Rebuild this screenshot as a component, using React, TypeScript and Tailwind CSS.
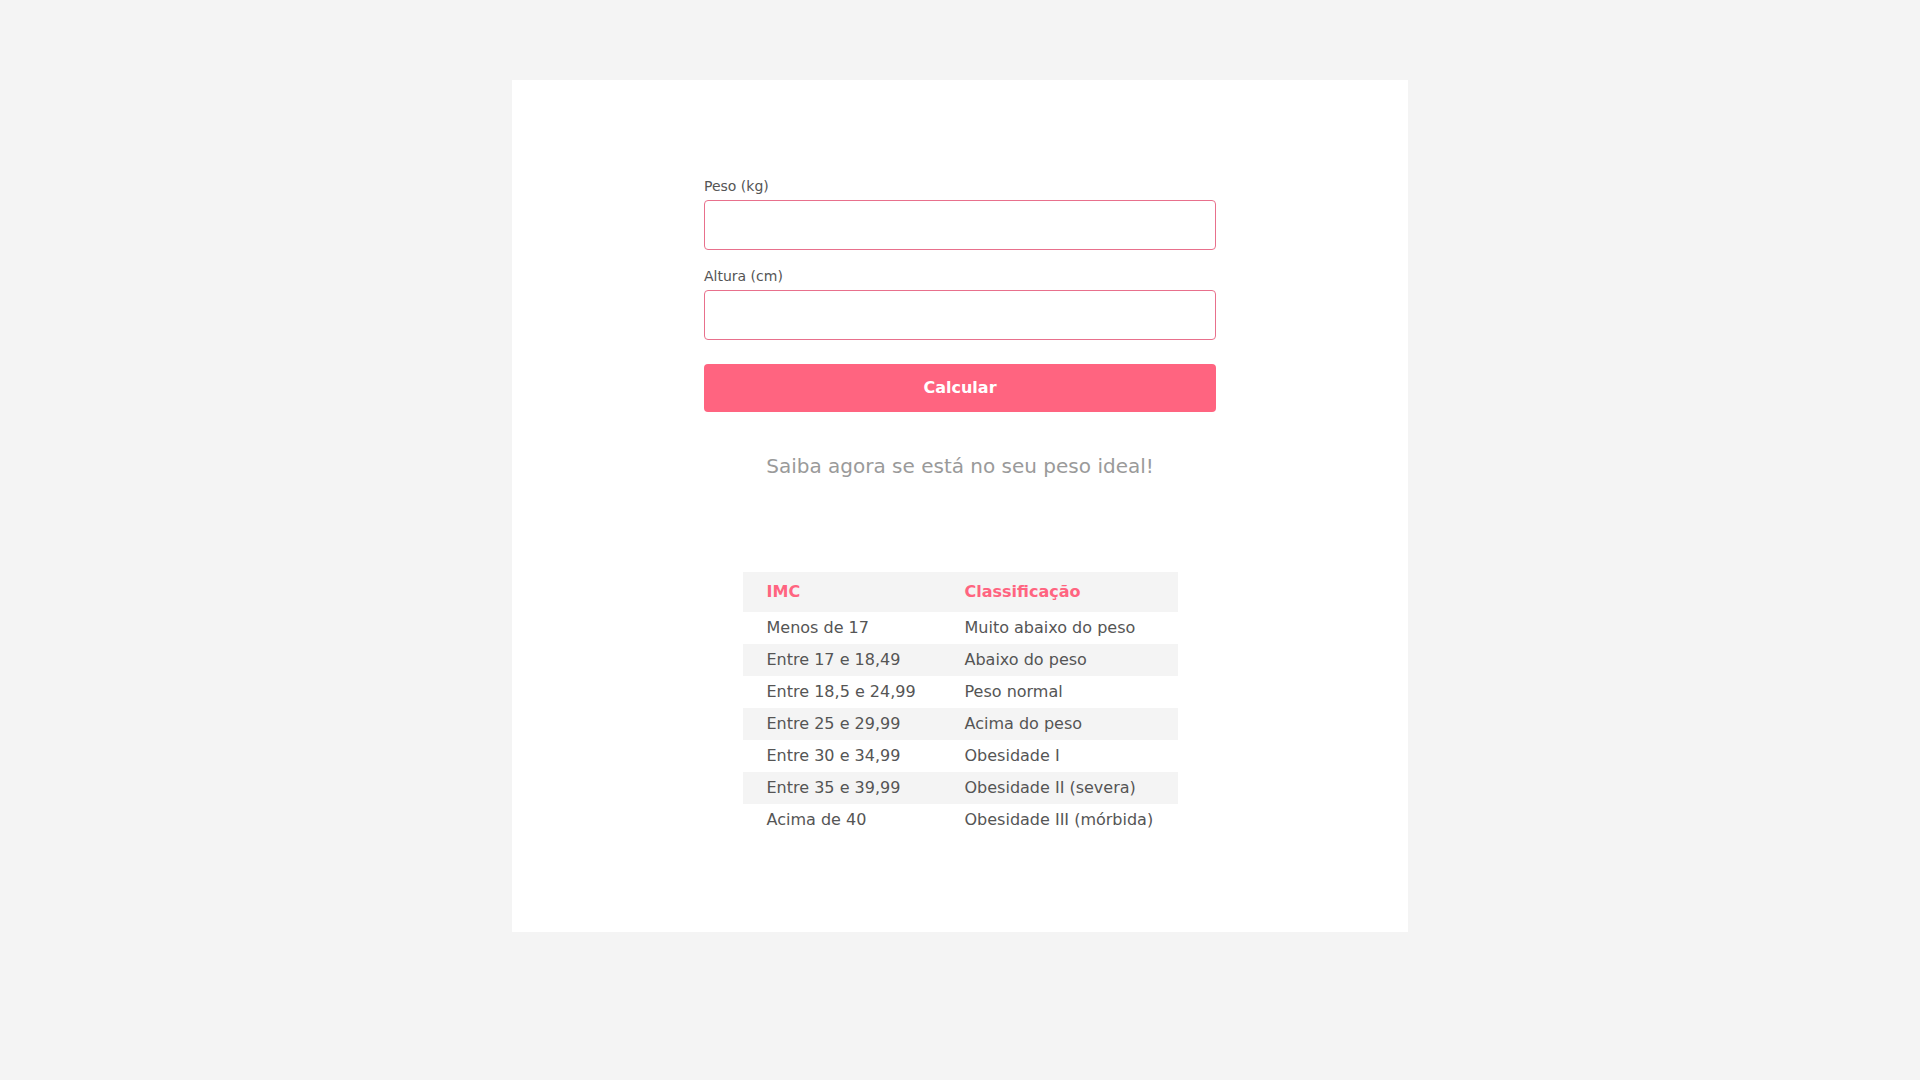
import React, { useState } from "react"

const faixas = [
  { imc: "Menos de 17", classificacao: "Muito abaixo do peso" },
  { imc: "Entre 17 e 18,49", classificacao: "Abaixo do peso" },
  { imc: "Entre 18,5 e 24,99", classificacao: "Peso normal" },
  { imc: "Entre 25 e 29,99", classificacao: "Acima do peso" },
  { imc: "Entre 30 e 34,99", classificacao: "Obesidade I" },
  { imc: "Entre 35 e 39,99", classificacao: "Obesidade II (severa)" },
  { imc: "Acima de 40", classificacao: "Obesidade III (mórbida)" },
]

const App = () => {
  const [peso, setPeso] = useState("")
  const [altura, setAltura] = useState("")
  const [resultado, setResultado] = useState("")

  const calcular = (e: React.FormEvent) => {
    e.preventDefault()
    const p = parseFloat(peso.replace(",", "."))
    const a = parseFloat(altura.replace(",", ".")) / 100
    if (!p || !a) return
    setResultado(`Seu IMC é ${(p / (a * a)).toFixed(2).replace(".", ",")}`)
  }

  return (
    <div
      className="min-h-screen bg-[#f4f4f4] pt-20 pb-[148px]"
      style={{ fontFamily: '"DejaVu Sans", Verdana, sans-serif' }}
    >
      <div className="mx-auto w-[896px] bg-white pt-24 pb-24">
        <form onSubmit={calcular} className="mx-auto w-[512px]">
          <label className="block text-sm leading-5 text-[#555] mb-1">
            Peso (kg)
          </label>
          <input
            value={peso}
            onChange={(e) => setPeso(e.target.value)}
            className="block w-full h-[50px] rounded border border-[#e8708c] px-3 outline-none mb-4"
          />
          <label className="block text-sm leading-5 text-[#555] mb-1">
            Altura (cm)
          </label>
          <input
            value={altura}
            onChange={(e) => setAltura(e.target.value)}
            className="block w-full h-[50px] rounded border border-[#e8708c] px-3 outline-none"
          />
          <button
            type="submit"
            className="mt-6 block w-full h-12 rounded bg-[#ff6480] text-white font-bold text-base cursor-pointer"
          >
            Calcular
          </button>
        </form>

        <p className="mt-10 text-center text-xl leading-7 text-[#9a9a9a]">
          {resultado || "Saiba agora se está no seu peso ideal!"}
        </p>

        <table className="mx-auto mt-[92px] w-[435px] border-collapse text-base text-[#555]">
          <thead>
            <tr className="bg-[#f4f4f4] h-10">
              <th className="w-[222px] pl-6 text-left font-bold text-[#ff6480]">
                IMC
              </th>
              <th className="text-left font-bold text-[#ff6480]">
                Classificação
              </th>
            </tr>
          </thead>
          <tbody>
            {faixas.map((f, i) => (
              <tr
                key={f.imc}
                className={i % 2 === 1 ? "bg-[#f4f4f4] h-8" : "bg-white h-8"}
              >
                <td className="pl-6">{f.imc}</td>
                <td>{f.classificacao}</td>
              </tr>
            ))}
          </tbody>
        </table>
      </div>
    </div>
  )
}

export default App
